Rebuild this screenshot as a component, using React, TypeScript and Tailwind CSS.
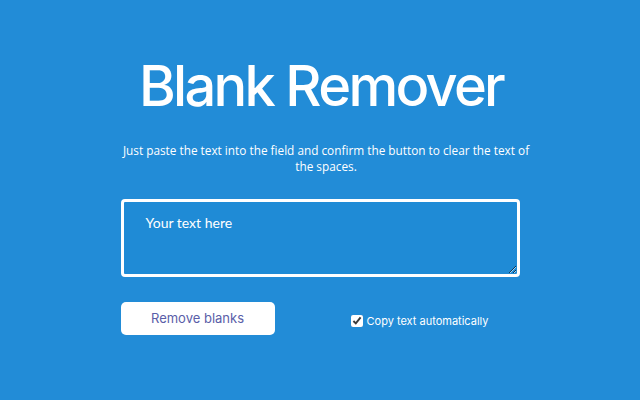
import { useState } from "react";

export default function App() {
  const [text, setText] = useState("");
  const [autoCopy, setAutoCopy] = useState(true);

  const removeBlanks = () => {
    const cleaned = text.replace(/\s+/g, "");
    setText(cleaned);
    if (autoCopy && navigator.clipboard) {
      navigator.clipboard.writeText(cleaned).catch(() => {});
    }
  };

  return (
    <div className="flex h-[400px] w-[640px] flex-col items-center bg-[#228cd7] font-['Inter',sans-serif] text-white">
      <h1 className="ml-[2px] mt-[50px] text-[56px] font-medium leading-[72px] tracking-[-2.7px]">
        Blank Remover
      </h1>
      <p className="ml-[12px] mt-[20px] w-[416px] text-center font-['Open_Sans',sans-serif] text-[11.8px] leading-[16px]">
        Just paste the text into the field and confirm the button to clear the text of the spaces.
      </p>
      <textarea
        value={text}
        onChange={(e) => setText(e.target.value)}
        placeholder="Your text here"
        className="mt-[25px] h-[78px] w-[399px] rounded-[4px] border-[3px] border-white bg-[#1f8bd6] px-[22px] py-[10px] font-['Lato',sans-serif] text-[14px] text-white outline-none placeholder:text-white"
      />
      <div className="mt-[25px] flex w-[399px] items-center">
        <button
          type="button"
          onClick={removeBlanks}
          className="h-[33px] w-[154px] rounded-[5px] bg-white text-[13px] text-[#5a5ea8]"
        >
          Remove blanks
        </button>
        <label className="ml-[76px] mt-[5px] flex items-center gap-[4px] text-[11px]">
          <input
            type="checkbox"
            checked={autoCopy}
            onChange={(e) => setAutoCopy(e.target.checked)}
            className="h-[12px] w-[12px] accent-white"
          />
          Copy text automatically
        </label>
      </div>
    </div>
  );
}
